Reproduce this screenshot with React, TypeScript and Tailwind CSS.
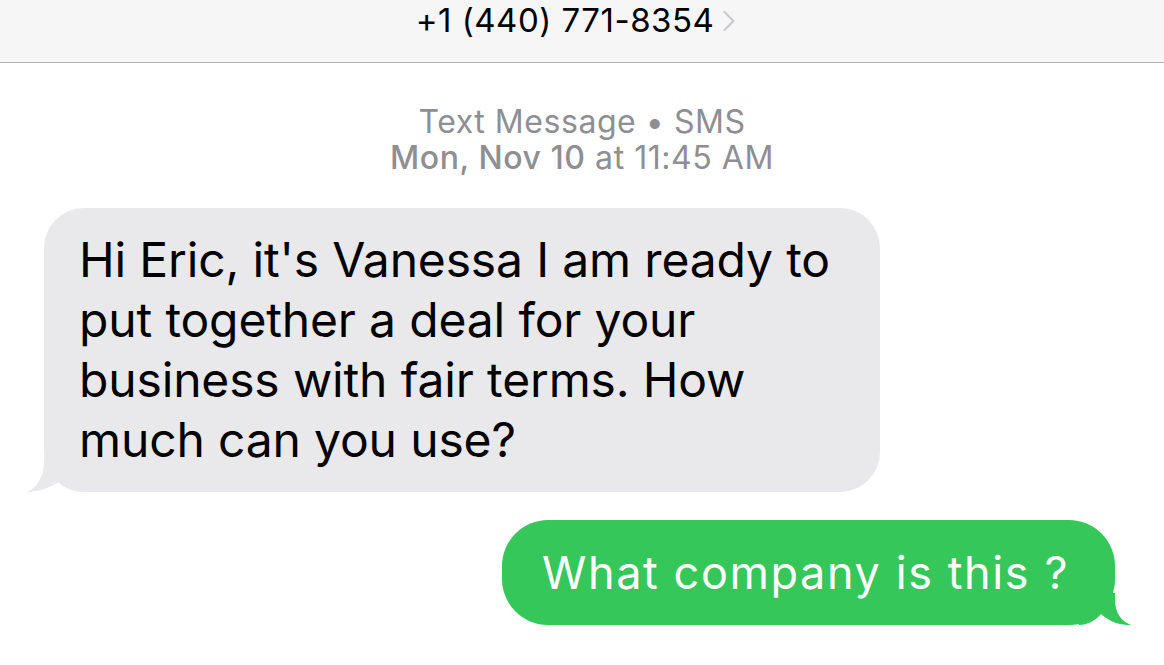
import React from 'react';

const font = { fontFamily: 'Inter, "Noto Sans", sans-serif' };

function GrayTail() {
    return (
        <svg className="absolute left-[-18px] bottom-0" width="60" height="34" viewBox="0 0 60 34">
            <path d="M18 0 L18 4 C18 20 10 30 1 34 C12 34 24 30 34 23 C40 30 48 34 60 34 L60 0 Z" fill="#e9e9eb" />
        </svg>
    );
}

function GreenTail() {
    return (
        <svg className="absolute right-[-16px] bottom-0" width="52" height="32" viewBox="0 0 52 32">
            <path d="M36 0 L36 6 C36 20 42 28 52 32 C42 32 32 30 22 21 C16 28 8 32 0 32 L0 0 Z" fill="#35c759" />
        </svg>
    );
}

export default function App() {
    return (
        <div className="w-[1164px] h-[665px] bg-white overflow-hidden" style={font}>
            {/* Header */}
            <div className="h-[63px] bg-[#f6f6f6] border-b border-[#b3b3b3] flex justify-center">
                <div className="flex items-start pr-[12px]">
                    <span className="text-[33px] leading-[40px] text-black tracking-[0.5px]">+1 (440) 771-8354</span>
                    <svg className="ml-[8px] mt-[10px]" width="14" height="22" viewBox="0 0 14 22">
                        <path d="M2.5 2 L11.5 11 L2.5 20" fill="none" stroke="#c7c7cc" strokeWidth="2" strokeLinecap="round" strokeLinejoin="round" />
                    </svg>
                </div>
            </div>

            {/* Timestamp */}
            <div className="mt-[41px] flex flex-col items-center text-[#8e8e93] text-[32px] leading-[36px] tracking-[0.55px]">
                <div>Text Message • SMS</div>
                <div><span className="font-medium">Mon, Nov 10</span> at 11:45 AM</div>
            </div>

            {/* Incoming */}
            <div className="mt-[32px] pl-[44px]">
                <div className="relative w-[836px] bg-[#e9e9eb] rounded-[40px] pl-[35px] pr-[20px] pt-[22px] pb-[22px]">
                    <GrayTail />
                    <p className="relative text-[48px] leading-[60px] tracking-[-0.15px] text-black">
                        Hi Eric, it's Vanessa I am ready to<br />
                        put together a deal for your<br />
                        business with fair terms. How<br />
                        much can you use?
                    </p>
                </div>
            </div>

            {/* Outgoing */}
            <div className="mt-[28px] flex justify-end pr-[49px]">
                <div className="relative bg-[#35c759] rounded-[46px] h-[105px] pl-[40px] pr-[46px] flex items-center">
                    <GreenTail />
                    <span className="relative text-[45px] leading-[50px] tracking-[1.6px] text-white">What company is this ?</span>
                </div>
            </div>
        </div>
    );
}
